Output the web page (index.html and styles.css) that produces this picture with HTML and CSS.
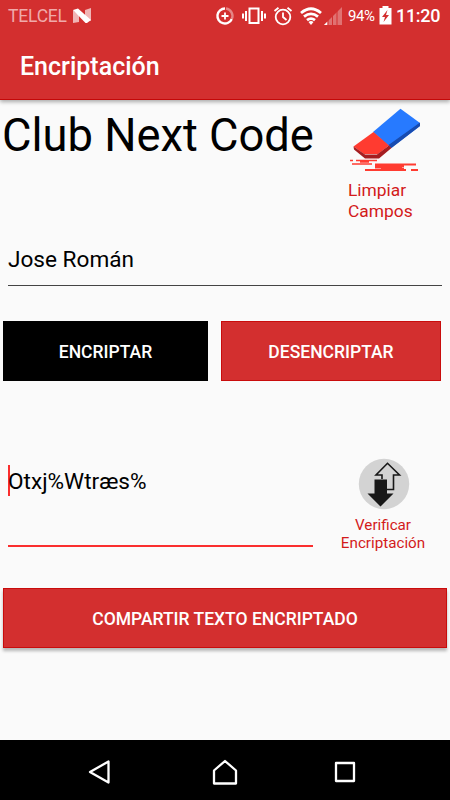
FILE: index.html
```html
<!DOCTYPE html>
<html lang="es">
<head>
<meta charset="utf-8">
<title>Encriptación</title>
<link rel="stylesheet" href="styles.css">
</head>
<body>
<header class="appbar">
  <div class="status">
    <span class="carrier">TELCEL</span>
    <svg class="nougat" width="18" height="16" viewBox="0 0 18 16"><path d="M0 2L6 7V14L0 15ZM12 2L18 0V13L12 9Z" fill="#f0b5b5"/><path d="M0 2L5 .500L18 12L14 15H12.500Z" fill="#fff"/></svg>
    <div class="system">
      <svg width="20" height="20" viewBox="0 0 20 20" fill="none" stroke="#fff" stroke-width="2.4"><path d="M10 2.5A7.5 7.5 0 1 0 16.8 13"/><path d="M11 2.5A7.5 7.5 0 0 1 16.8 13" stroke="#e58686"/><path d="M10 6.500V13.500M6.500 10H13.500" stroke-width="1.8"/></svg>
      <svg class="vibrate" width="24" height="20" viewBox="0 0 24 20" fill="none" stroke="#fff" stroke-width="2"><rect x="7.5" y="2.5" width="9" height="14.500"/><path d="M4 5V15M20 5V15M1 7.5V12.5M23 7.5V12.5"/></svg>
      <svg class="alarm" width="20" height="20" viewBox="0 0 20 20" fill="none" stroke="#fff" stroke-width="1.8"><circle cx="10" cy="11" r="7.3"/><path d="M10 6.5V11L13.5 14M1.5 5L5.5 1.7M18.500 5L14.500 1.700"/></svg>
      <svg class="wifi" width="24" height="20" viewBox="0 0 24 20" fill="none" stroke="#fff" stroke-width="2.8"><path d="M2 7Q12-1.500 22 7M5 10.700Q12 5 19 10.700M8 14.200Q12 11 16 14.200"/><path d="M9.500 16Q12 14.200 14.500 16L12 19Z" fill="#fff" stroke="none"/></svg>
      <svg class="signal" width="18" height="18" viewBox="0 0 18 18"><path d="M0 18L18 0V18Z" fill="#e07272"/><path d="M0 18L3.500 14.500V18Z" fill="#fff"/><path d="M4 13V18M8.500 9V18M13 4V18" stroke="#d32f2f" stroke-width="1"/></svg>
      <span class="percent">94%</span>
      <svg class="battery" width="13" height="19" viewBox="0 0 13 19"><path d="M3.500 0H9.500V2H12.500V18.500H.5V2H3.500Z" fill="#fff"/><path d="M8.500 4L3 11H6L4.500 16L10 9H7Z" fill="#d32f2f"/></svg>
      <time class="clock">11:20</time>
    </div>
  </div>
  <h1 class="screen-title">Encriptación</h1>
</header>

<main class="content">
  <section class="intro">
    <h2 class="club">Club Next Code</h2>
    <div class="clear">
      <svg class="eraser" width="73" height="66" viewBox="0 0 73 66">
        <path d="M51.500 .8L71 15V18L42 40L24 24Z" fill="#277aff"/><path d="M71 14.500V18L42.500 40L39.500 37Z" fill="#174bb0"/>
        <path d="M24.500 24L40 37.500L29 46H15L4.500 38.500Z" fill="#ff3b30"/><path d="M4.500 38.500L16 46.500H28L40 37.500L42.500 40L30 50.500H16L5 41.500Z" fill="#a51d20"/>
        <path d="M1 52.500H4M7 52.500H28M3 56H23M11 54H20" stroke="#ff3b30" stroke-width="1.700"/>
        <path d="M26 56.500H67M26 58H55M26 59.500H53M16 62H57M62 62H69M32 60.500H55" stroke="#ff3b30" stroke-width="1.900"/>
      </svg>
      <span class="clear-label">Limpiar<br>Campos</span>
    </div>
  </section>

  <div class="field name">Jose Román</div>

  <div class="actions">
    <button class="btn encrypt">ENCRIPTAR</button>
    <button class="btn decrypt">DESENCRIPTAR</button>
  </div>

  <section class="result">
    <div class="field output"><span class="output-text">Otxj%Wtræs%</span></div>
    <div class="verify">
      <svg width="52" height="52" viewBox="0 0 52 52"><circle cx="26" cy="26" r="25.200" fill="#d3d3d3"/><path d="M27 31.500H35.500V17H41.500L29.500 5.300L18 17H24V21" fill="none" stroke="#181818" stroke-width="1.600"/><path d="M16.500 21.500H29V35.500H35.500L22.500 48.500L9.500 35.500H16.500Z" fill="#181818"/></svg>
      <span class="verify-label">Verificar<br>Encriptación</span>
    </div>
  </section>

  <button class="btn share">COMPARTIR TEXTO ENCRIPTADO</button>
</main>

<nav class="navbar">
  <svg width="26" height="26" viewBox="0 0 26 26"><path d="M3 13L21.500 2.500V23.500Z"/></svg>
  <svg width="28" height="28" viewBox="0 0 28 28"><path d="M3 25.500V12.500L14 3L25 12.500V25.500Z"/></svg>
  <svg class="recents" width="24" height="24" viewBox="0 0 24 24"><path d="M3 3H21V21H3Z"/></svg>
</nav>
</body>
</html>
```

FILE: styles.css
```css
* { box-sizing: border-box; }
body {
  margin: 0;
  width: 450px;
  height: 800px;
  overflow: hidden;
  display: flex;
  flex-direction: column;
  background: #fafafa;
  color: #000;
  font-family: Roboto, sans-serif;
}
svg { display: block; flex: none; }
h1, h2 { margin: 0; font-weight: 400; white-space: nowrap; }
.appbar {
  height: 100px;
  flex: none;
  background: #d32f2f;
  border-bottom: 1px solid #c40808;
  box-shadow: 0 2px 4px rgba(0, 0, 0, .32);
  color: #fff;
}
.status { height: 32px; display: flex; align-items: center; padding: 0 10px 1px 8px; }
.carrier { width: 58px; flex: none; font-size: 17.5px; color: #f0aaaa; letter-spacing: -.2px; }
.nougat { margin-left: 7px; }
.system { display: flex; align-items: center; margin-left: 124px; flex: none; }
.vibrate { margin-left: 7px; }
.alarm { margin-left: 7px; }
.wifi { margin-left: 6px; }
.signal { margin-left: 1px; }
.percent { width: 27px; margin-left: 6px; font-size: 15px; letter-spacing: -.4px; }
.battery { margin-left: 4px; }
.clock { margin-left: 4px; font-size: 18px; font-weight: 500; letter-spacing: -.3px; }
.screen-title { padding: 20px 0 0 20px; font-size: 25px; line-height: 30px; font-weight: 500; }
.content { height: 640px; flex: none; padding: 0 3px; }
.intro { height: 134px; display: flex; justify-content: space-between; }
.club { margin-left: -1px; padding-top: 9px; font-size: 45.3px; line-height: 54px; }
.clear { width: 99px; padding-top: 8px; }
.eraser { margin-left: 1px; }
.clear-label { display: block; margin-top: 6px; font-size: 17.4px; line-height: 21px; color: #d31b1b; }
.field { font-size: 22.6px; line-height: 28px; }
.name { height: 52px; margin: 0 5px; padding-top: 12px; border-bottom: 1px solid #444; }
.actions { display: flex; gap: 13px; margin-top: 35px; }
.btn {
  height: 60px;
  padding: 2px 0 0;
  border: 1px solid #c90c0c;
  background: #d32f2f;
  color: #fff;
  font: 500 17.5px Roboto, sans-serif;
  white-space: nowrap;
}
.encrypt { width: 205px; background: #000; border-color: #000; }
.decrypt { width: 220px; }
.result { height: 207px; display: flex; }
.output { width: 305px; height: 166px; margin-left: 5px; padding-top: 84px; border-bottom: 2px solid #fa2e2e; }
.output-text { display: block; height: 31px; line-height: 34px; border-left: 2px solid #fa2e2e; text-indent: -2px; }
.verify { width: 112px; margin-left: 14px; padding-top: 77px; display: flex; flex-direction: column; align-items: center; }
.verify svg { margin-left: 1px; }
.verify-label { margin-top: 7px; text-align: center; font-size: 15.2px; line-height: 17.5px; color: #d31b1b; }
.share { display: block; width: 444px; box-shadow: 0 3px 3px rgba(0, 0, 0, .27); }
.navbar { height: 60px; flex: none; background: #000; padding: 4px 0 0 87px; display: flex; align-items: center; gap: 98px; }
.recents { margin-left: -4px; }
.navbar path { fill: none; stroke: #fff; stroke-width: 2.3; stroke-linejoin: round; }
```
